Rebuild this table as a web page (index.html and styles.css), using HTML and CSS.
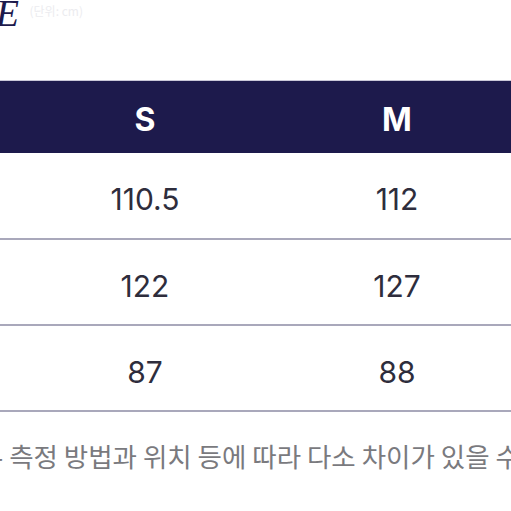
FILE: index.html
```
<html>
<head>
  <meta charset="utf-8">
  <link rel="stylesheet" href="styles.css">
</head>
<body>
<div class="title">
  <span class="title-main">SIZE</span>
  <span class="title-unit">(단위: cm)</span>
</div>
<table class="sizes">
  <tr class="head">
    <th>사이즈</th>
    <th>S</th>
    <th>M</th>
    <th>L</th>
  </tr>
  <tr>
    <td>가슴둘레</td>
    <td>110.5</td>
    <td>112</td>
    <td>116</td>
  </tr>
  <tr>
    <td>밑단둘레</td>
    <td>122</td>
    <td>127</td>
    <td>132</td>
  </tr>
  <tr>
    <td>총장</td>
    <td>87</td>
    <td>88</td>
    <td>89</td>
  </tr>
</table>
<p class="note">- 측정 방법과 위치 등에 따라 다소 차이가 있을 수 있습니다.</p>
</body>
</html>
```

FILE: styles.css
```
html{
    overflow: hidden;
}
body{
    margin: 0;
    width: 511px;
    height: 511px;
    overflow: hidden;
    background: #ffffff;
    font-family: Inter, "Liberation Sans", sans-serif;
}
.title{
    height: 80px;
    white-space: nowrap;
    margin-left: -57px;
}
.title-main{
    font-family: "Liberation Serif", serif;
    font-style: italic;
    font-size: 38px;
    color: #1d1a4c;
    line-height: 26px;
    vertical-align: top;
}
.title-unit{
    font-family: "Noto Sans CJK KR", sans-serif;
    font-size: 12px;
    color: #ececef;
    margin-left: 6px;
    vertical-align: top;
    line-height: 22px;
}
.sizes{
    border-collapse: collapse;
    table-layout: fixed;
    width: 1008px;
    margin-left: -233px;
}
.sizes th,
.sizes td{
    width: 252px;
    padding: 0;
    text-align: center;
}
.head th{
    background: #1d1a4c;
    color: #ffffff;
    font-weight: 700;
    font-size: 32px;
    height: 72px;
    border-top: 1px solid #c9c8d8;
    padding-top: 6px;
    box-sizing: border-box;
}
.sizes td{
    height: 86px;
    font-size: 30px;
    color: #2e2d3c;
    border-bottom: 2px solid #a9a8bb;
    padding-top: 8px;
    box-sizing: border-box;
}
.note{
    margin: 0 0 0 -6px;
    padding-top: 24px;
    white-space: nowrap;
    font-family: "Noto Sans CJK KR", sans-serif;
    font-size: 26.5px;
    color: #7a7a7e;
}
```
